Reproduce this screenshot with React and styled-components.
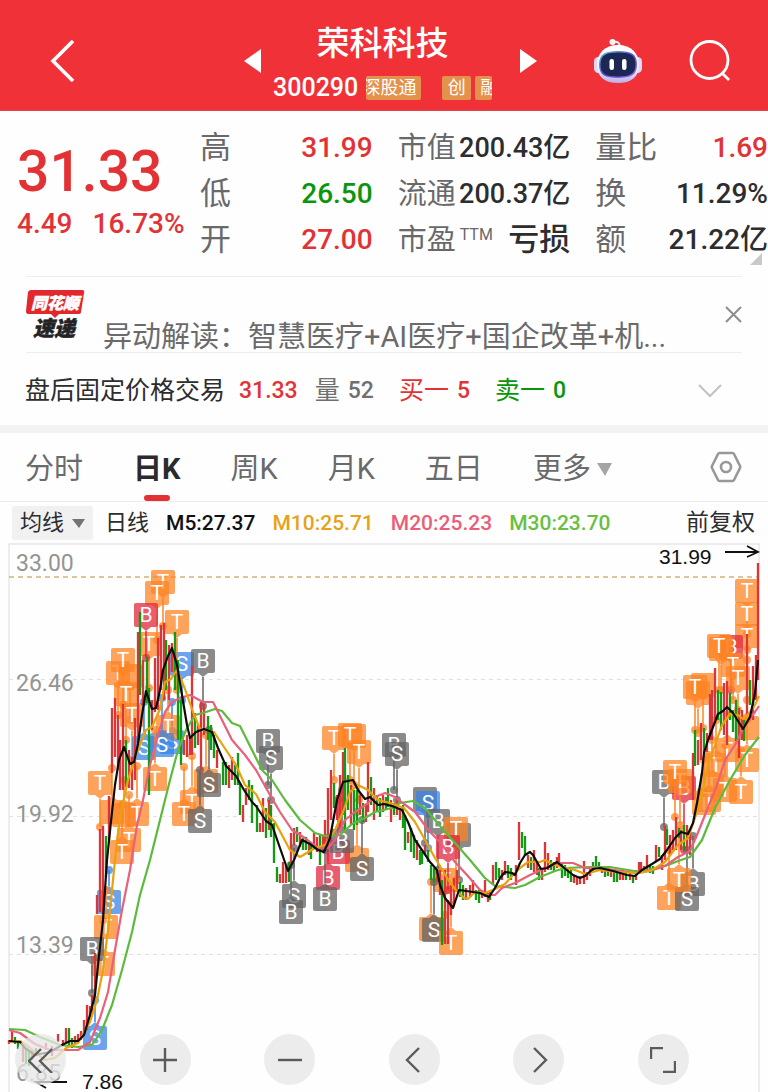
import React from "react";
import styled, { createGlobalStyle } from "styled-components";

const GlobalStyle = createGlobalStyle`
  * { box-sizing: border-box; }
  body {
    margin: 0;
    background: #fefefe;
    color: #2d2d2f;
    font-family: Roboto, "Noto Sans CJK SC", sans-serif;
  }
  button, select { font: inherit; color: inherit; border: 0; background: none; padding: 0; margin: 0; cursor: pointer; }
  svg { display: block; flex: none; }
  h1, p, dl, dd, dt { margin: 0; font-weight: 400; }
`;

const RED = "#e23236";
const GREEN = "#0a960a";

/* ---------- header ---------- */

const Header = styled.header`
  display: grid;
  grid-template-columns: 1fr auto 1fr;
  align-items: center;
  height: 111px;
  padding: 12px 37px 0 50px;
  background: #f03238;
  border-bottom: 1px solid #d9474b;
  color: #fff;
`;

const IconButton = styled.button`
  display: flex;
  align-items: center;
  justify-content: center;
  justify-self: start;
`;

const StockSwitcher = styled.div`
  display: flex;
  align-items: center;
  gap: 12px;
`;

const StockTitle = styled.div`
  display: flex;
  flex-direction: column;
  align-items: center;
  width: 235px;
  padding: 6px 16px 0 0;
`;

const StockName = styled.h1`
  font-size: 33px;
  line-height: 48px;
  font-weight: 500;
`;

const CodeRow = styled.div`
  display: flex;
  align-items: center;
  width: 100%;
  height: 40px;
`;

const Code = styled.span`
  font-size: 25px;
  line-height: 32px;
  font-weight: 500;
  margin-right: 8px;
`;

const Tag = styled.span`
  display: flex;
  justify-content: ${(p) => p.$from};
  width: ${(p) => p.$w}px;
  height: 24px;
  margin-right: ${(p) => p.$after || 0}px;
  padding: 0 5px;
  overflow: hidden;
  background: #e4914b;
  border-radius: 2px;
  font-size: 18px;
  line-height: 23px;
  white-space: nowrap;
`;

const HeaderActions = styled.div`
  display: flex;
  align-items: center;
  justify-content: flex-end;
  gap: 46px;
`;

/* ---------- quote ---------- */

const Quote = styled.section`
  position: relative;
  display: grid;
  grid-template-columns: 175px 1fr 1fr 1fr;
  column-gap: 25px;
  padding: 14px 0 13px;
`;

const PriceBlock = styled.div`
  padding: 14px 0 0 17px;
  color: ${RED};
`;

const Price = styled.p`
  font-size: 57px;
  line-height: 66px;
  font-weight: 500;
`;

const Change = styled.p`
  display: flex;
  gap: 20px;
  font-size: 28px;
  line-height: 38px;
  font-weight: 500;
`;

const StatList = styled.dl`
  display: flex;
  flex-direction: column;
`;

const Stat = styled.div`
  display: flex;
  align-items: center;
  justify-content: space-between;
  height: 46px;
  white-space: nowrap;
`;

const StatLabel = styled.dt`
  display: flex;
  color: #69696b;
  font-size: ${(p) => p.$size}px;
  line-height: 46px;
`;

const Sup = styled.span`
  margin-left: 4px;
  font-size: 16px;
  line-height: 36px;
`;

const StatValue = styled.dd`
  color: ${(p) => p.$color || "#2d2d2f"};
  font-size: ${(p) => p.$size}px;
  line-height: 46px;
  font-weight: 500;
`;

const Corner = styled.span`
  position: absolute;
  right: 6px;
  bottom: 11px;
  border-left: 12px solid transparent;
  border-bottom: 12px solid #c9c9c9;
`;

/* ---------- news + after hours ---------- */

const News = styled.section`
  display: flex;
  align-items: center;
  gap: 18px;
  height: 77px;
  margin: 0 26px;
  border: solid #ededed;
  border-width: 1px 0;
`;

const NewsLink = styled.a`
  flex: 1;
  min-width: 0;
  align-self: flex-end;
  color: #6a6a6c;
  font-size: 29px;
  line-height: 30px;
  white-space: nowrap;
  text-decoration: none;
`;

const AfterHours = styled.section`
  display: flex;
  align-items: center;
  height: 72px;
  padding: 4px 46px 0 25px;
  font-size: 25px;
  line-height: 36px;
  white-space: nowrap;
`;

const Figure = styled.span`
  display: flex;
  gap: 8px;
  margin-left: ${(p) => p.$before}px;
  color: ${(p) => p.$color};
`;

const Num = styled.span`
  font-size: 23px;
  font-weight: 500;
`;

const Spacer = styled.span`
  flex: 1;
`;

const Divider = styled.div`
  height: 8px;
  background: #f3f3f3;
`;

/* ---------- tabs ---------- */

const Tabs = styled.nav`
  display: flex;
  align-items: center;
  height: 69px;
  padding: 0 26px 0 25px;
  border-bottom: 1px solid #ececec;
`;

const Tab = styled.button`
  position: relative;
  display: flex;
  align-items: center;
  gap: 6px;
  height: 68px;
  padding-top: 4px;
  margin-right: 50px;
  color: ${(p) => (p.$active ? "#2b2b2d" : "#6a6a6c")};
  font-size: 29px;
  font-weight: ${(p) => (p.$active ? 700 : 400)};
  line-height: 64px;
  white-space: nowrap;
  &::after {
    content: "";
    position: absolute;
    left: 50%;
    bottom: 0;
    width: 26px;
    height: 6px;
    margin-left: -13px;
    border-radius: 3px;
    background: ${(p) => (p.$active ? RED : "transparent")};
  }
`;

const Averages = styled.div`
  display: flex;
  align-items: center;
  height: 41px;
  padding: 1px 13px 0 12px;
  font-size: 22px;
  line-height: 34px;
  white-space: nowrap;
`;

const SelectBox = styled.label`
  position: relative;
  display: flex;
  width: 81px;
  margin-right: 12px;
  background: #f1f1f1;
  border-radius: 3px;
  select { appearance: none; width: 100%; height: 34px; padding: 0 8px; outline: 0; line-height: 34px; }
  svg { position: absolute; right: 8px; top: 13px; pointer-events: none; }
`;

const Average = styled.span`
  margin-left: 17px;
  color: ${(p) => p.$color};
  font-size: 21px;
  font-weight: 500;
`;

const Adjust = styled.button`
  font-size: 23px;
`;

/* ---------- chart ---------- */

const ChartArea = styled.section`
  position: relative;
  > svg { width: 100%; height: auto; }
`;

const Controls = styled.div`
  position: absolute;
  left: 0;
  right: 0;
  bottom: 7px;
  display: flex;
  justify-content: space-between;
  padding: 0 79px 0 15px;
`;

const RoundButton = styled.button`
  display: flex;
  align-items: center;
  justify-content: center;
  width: 51px;
  height: 51px;
  border-radius: 50%;
  background: rgba(230, 230, 230, 0.76);
`;

const MOVING_AVERAGES = [
  {
    color: "#5cba3c",
    pts: "9,1029 25,1030 40,1037 60,1045 78,1047 92,1045 102,1030 112,1005 122,970 132,932 140,895 150,860 160,820 170,780 178,750 186,730 195,715 203,713 215,709 222,711 232,723 240,726 252,750 262,770 272,780 285,800 300,820 315,833 325,836 340,835 352,824 365,818 375,812 392,808 400,803 413,801 425,808 440,826 455,843 470,860 485,878 495,886 515,888 525,885 540,877 555,871 565,868 590,867 610,867 640,872 652,869 668,865 678,861 690,857 702,840 715,808 730,780 745,755 755,742 759,737",
  },
  {
    color: "#e9607b",
    pts: "9,1030 20,1033 35,1044 50,1050 60,1050 78,1050 90,1042 100,1018 108,992 115,950 122,910 130,870 137,825 142,805 150,765 158,735 165,712 172,702 180,698 190,695 203,702 213,702 222,720 232,740 245,755 256,770 270,795 280,812 292,830 305,838 318,848 328,848 335,840 345,820 355,812 368,803 375,797 385,793 395,797 404,804 415,812 430,832 440,842 455,862 467,875 480,890 487,895 495,895 502,888 515,883 530,875 545,868 560,863 573,863 585,868 600,868 615,870 635,873 650,871 665,866 678,857 690,851 697,835 707,810 717,785 725,760 735,745 745,725 755,712 759,706",
  },
  {
    color: "#e8a20c",
    pts: "9,1042 20,1041 30,1048 45,1060 55,1058 66,1048 78,1043 90,1022 97,1000 103,970 108,930 112,890 117,840 121,812 128,780 137,752 146,730 152,727 160,709 165,682 171,679 177,670 185,689 193,712 200,729 214,732 224,747 236,765 245,785 256,794 265,812 275,822 290,850 300,857 315,848 325,845 335,830 343,812 350,792 358,785 368,790 378,800 390,803 404,808 415,822 425,840 435,858 440,866 447,878 455,889 464,898 468,899 475,892 485,893 495,889 505,884 513,875 520,868 528,862 540,862 545,860 552,864 562,867 575,870 585,874 600,870 615,872 640,873 652,870 665,862 678,845 688,838 695,818 703,790 708,765 715,745 722,725 730,714 738,715 743,719 750,712 755,705 759,696",
  },
  {
    color: "#0c0c0c",
    pts: "9,1041 20,1042 25,1048 35,1055 50,1052 62,1045 70,1041 78,1041 84,1035 90,1015 95,995 98,965 103,920 107,860 112,812 115,785 119,760 124,747 130,764 134,762 138,744 142,715 146,691 152,709 156,708 160,690 163,670 168,656 172,648 177,665 182,695 187,725 190,738 196,732 204,729 212,732 218,748 226,766 236,776 244,790 252,802 256,806 266,821 272,825 280,848 288,871 294,860 302,840 310,844 318,850 324,852 330,838 337,800 343,782 353,780 358,790 365,799 370,797 378,805 384,804 392,806 402,810 408,822 415,840 424,853 430,862 437,870 440,885 445,898 453,908 459,890 466,891 480,893 489,897 495,888 500,878 505,872 512,873 515,875 520,863 525,855 530,852 533,855 537,862 541,869 547,868 557,862 563,867 573,875 580,878 585,876 593,869 600,868 613,871 627,875 635,876 642,870 652,864 660,859 667,850 675,838 681,832 688,834 693,823 697,803 702,773 704,753 708,740 718,714 723,711 727,707 733,713 743,729 750,717 755,693 758,660",
  },
];

/* x, high, low of each bar */
const UP_BARS =
  "9,1040,1044 12,1030,1041 23,1046,1062 32,1050,1060 46,1043,1050 52,1046,1056 58,1034,1042 63,1040,1044 66,1028,1042 75,1036,1045 78,1034,1043 81,1031,1040 84,1020,1035 87,1005,1030 90,1006,1017 92,995,1012 95,953,990 97,895,914 100,829,912 103,826,914 109,796,840 112,708,773 115,698,757 118,715,770 120,740,790 123,704,790 129,750,788 132,757,790 135,718,780 138,632,745 143,660,705 152,700,730 155,658,712 158,638,710 161,625,690 164,623,700 169,645,700 172,643,672 184,740,755 187,735,757 190,738,755 192,666,755 198,725,745 201,702,770 204,704,735 217,750,768 229,765,788 232,757,780 243,805,822 246,788,805 260,823,832 263,798,832 269,800,830 280,874,883 283,862,883 286,865,883 291,833,865 294,828,845 300,832,847 309,842,855 314,833,848 317,837,852 323,835,850 325,820,845 328,788,838 331,770,820 337,795,820 340,775,830 343,752,815 351,785,825 360,795,815 366,805,822 368,762,812 374,788,820 383,795,812 391,800,822 397,797,815 400,808,820 408,832,843 417,840,860 425,845,855 437,872,882 440,870,895 445,870,944 448,900,944 451,885,915 454,878,905 457,870,892 466,888,900 470,885,897 473,880,893 482,890,898 485,880,897 488,893,902 493,865,885 502,870,880 505,861,875 516,865,885 519,822,860 528,855,868 534,850,872 537,862,875 542,868,880 545,842,872 548,853,870 557,857,868 559,853,865 574,875,883 577,877,885 580,876,884 584,861,884 587,872,880 590,867,876 602,866,873 611,870,877 620,873,880 623,870,880 630,872,880 636,870,880 639,862,872 641,862,873 644,866,873 647,855,871 656,845,862 662,855,870 665,826,860 670,835,855 673,830,850 676,817,850 681,830,850 687,825,850 690,830,855 693,753,800 698,740,765 701,723,760 707,733,752 710,694,740 712,690,740 715,668,720 724,683,735 727,681,745 739,708,758 742,710,740 747,634,715 753,666,720 756,655,700 758,563,680";
const DOWN_BARS =
  "15,1037,1044 18,1041,1049 26,1048,1064 29,1052,1066 36,1048,1056 69,1028,1046 72,1038,1048 106,836,877 126,740,787 140,612,695 147,657,703 149,688,795 166,640,690 175,632,690 178,660,740 181,700,765 195,713,748 208,716,740 211,725,750 214,735,758 223,762,785 226,762,785 235,765,785 238,753,785 240,783,815 249,780,800 252,785,823 257,805,832 266,808,838 271,805,837 274,823,863 277,867,882 289,862,882 297,827,842 303,838,850 306,837,850 311,845,859 320,835,865 334,783,808 345,748,830 348,775,810 354,790,830 357,790,825 363,803,822 371,777,805 377,795,812 380,798,817 386,797,810 388,788,807 394,803,815 403,805,828 405,815,850 411,828,852 414,835,858 420,850,865 422,852,864 428,850,862 431,865,880 434,868,882 442,880,945 460,882,897 463,885,900 476,890,900 479,890,903 490,892,900 496,862,880 499,868,878 508,865,878 511,868,880 522,832,848 525,836,855 531,857,870 539,868,880 551,860,870 554,862,872 562,862,878 565,865,876 568,868,878 571,868,882 593,862,872 596,856,867 599,862,868 605,868,877 608,868,876 614,872,882 617,872,882 626,872,880 633,876,883 650,865,873 653,866,874 659,847,857 667,829,845 679,828,838 684,825,850 695,730,766 704,728,753 718,690,720 721,692,730 730,693,720 733,710,732 736,700,741 744,720,741 750,680,705";

/* x and y of the flag, colour key, letter, y of the bar that it points at */
const FLAGS = [
  [163, 582, "o", "T", 626], [157, 593, "o", "T", 640], [149, 644, "o", "T", 688], [146, 615, "r", "B", 658],
  [182, 664, "b", "S", 700], [177, 622, "o", "T", 690], [118, 673, "o", "T", 715], [130, 676, "o", "", 720],
  [123, 660, "o", "T", 705], [126, 694, "o", "T", 740], [132, 715, "o", "T", 760], [203, 661, "g", "B", 706],
  [172, 742, "b", "S", 702], [168, 727, "o", "T", 690], [144, 748, "b", "S", 702], [162, 745, "b", "S", 698],
  [155, 779, "o", "T", 730], [112, 812, "o", "", 768], [100, 783, "o", "T", 827], [124, 815, "o", "", 780],
  [137, 814, "o", "T", 766], [129, 840, "o", "T", 795], [122, 852, "o", "T", 805], [192, 802, "o", "T", 756],
  [206, 781, "o", "", 735], [184, 814, "o", "T", 767], [209, 785, "g", "S", 730], [200, 821, "g", "S", 770],
  [109, 902, "b", "S", 870], [106, 927, "o", "T", 890], [103, 964, "o", "T", 920], [92, 949, "g", "B", 993],
  [95, 1038, "b", "S", 1000], [268, 741, "g", "B", 785], [271, 758, "g", "S", 800], [294, 896, "g", "S", 848],
  [291, 912, "g", "B", 865], [334, 738, "o", "T", 780], [354, 736, "o", "", 785], [350, 735, "o", "T", 780],
  [359, 752, "o", "T", 800], [357, 860, "o", "", 812], [362, 869, "g", "S", 820], [338, 852, "r", "B", 800],
  [342, 841, "g", "B", 790], [328, 878, "r", "B", 838], [325, 899, "g", "B", 850], [394, 745, "g", "B", 790],
  [397, 754, "g", "S", 800], [425, 799, "g", "", 843], [428, 803, "b", "S", 848], [438, 821, "g", "B", 870],
  [459, 835, "g", "", 880], [456, 829, "o", "T", 880], [445, 880, "o", "T", 915], [448, 847, "r", "B", 890],
  [431, 929, "o", "", 882], [434, 930, "g", "S", 882], [451, 943, "o", "T", 905], [664, 782, "g", "B", 827],
  [684, 788, "r", "B", 850], [680, 781, "o", "T", 825], [675, 772, "o", "T", 817], [669, 898, "o", "T", 850],
  [693, 884, "g", "B", 836], [687, 899, "g", "S", 850], [679, 880, "o", "T", 830], [704, 803, "o", "T", 760],
  [709, 800, "o", "T", 755], [716, 765, "o", "T", 720], [712, 785, "o", "", 740], [727, 750, "o", "T", 715],
  [725, 790, "o", "T", 745], [741, 792, "o", "T", 750], [747, 760, "o", "T", 720], [747, 728, "o", "", 700],
  [747, 591, "o", "T", 634], [747, 614, "o", "T", 650], [747, 636, "o", "T", 660], [731, 647, "r", "B", 690],
  [721, 649, "o", "", 690], [719, 646, "o", "T", 690], [733, 665, "o", "T", 700], [738, 678, "o", "T", 710],
  [703, 685, "o", "", 728], [698, 693, "o", "", 733], [695, 687, "o", "T", 730],
];
const FLAG_COLORS = { o: "#ff8423", b: "#3985e6", g: "#636363", r: "#e2273d" };

function Flag({ x, y, kind, letter, target }) {
  const up = target < y;
  const edge = up ? y - 12 : y + 12;
  const tip = up ? edge - 4 : edge + 4;
  const color = FLAG_COLORS[kind];
  return (
    <g fill={color}>
      <g opacity="0.74">
        <rect x={x - 12} y={y - 12} width="24" height="24" rx="2" />
        <path d={`M${x - 5} ${edge}L${x} ${tip}L${x + 5} ${edge}Z`} />
        <circle cx={x} cy={target} r="4" />
      </g>
      <path d={`M${x} ${tip}V${target}`} stroke={color} strokeWidth="1.5" />
      <text x={x} y={y + 7} textAnchor="middle" fontSize="21" fill="#fff" fontFamily="Roboto, sans-serif">{letter}</text>
    </g>
  );
}

function Bars({ data, color }) {
  const d = data.split(" ").map((b) => {
    const [x, hi, lo] = b.split(",");
    return `M${x} ${hi}V${lo}`;
  }).join("");
  return <path d={d} stroke={color} strokeWidth="2.3" fill="none" />;
}

function KLineChart() {
  return (
    <svg viewBox="0 543 768 549" role="img" aria-label="日K">
      <path d="M9 1092V544H759V1092" fill="none" stroke="#e6e6e6" strokeWidth="1.4" />
      <path d="M9 679.500H759M9 816.500H759M9 954.500H759" stroke="#e2e2e2" strokeWidth="1.2" strokeDasharray="4 4" />
      <path d="M9 577H759" stroke="#cfb27c" strokeWidth="1.5" strokeDasharray="5 4" />
      {FLAGS.map(([x, y, kind, letter, target], i) => (
        <Flag key={i} x={x} y={y} kind={kind} letter={letter} target={target} />
      ))}
      <Bars data={UP_BARS} color="#dc3538" />
      <Bars data={DOWN_BARS} color="#129a14" />
      {MOVING_AVERAGES.map((m) => (
        <polyline key={m.color} points={m.pts} fill="none" stroke={m.color} strokeWidth="2.2" strokeLinejoin="round" />
      ))}
      <g fontFamily="Roboto, sans-serif" fontSize="23" fill="#949494">
        <text x="16" y="571">33.00</text>
        <text x="16" y="691">26.46</text>
        <text x="16" y="822">19.92</text>
        <text x="16" y="953">13.39</text>
        <text x="16" y="1081">6.85</text>
      </g>
      <g fontFamily="'Liberation Sans', sans-serif" fontSize="21" fill="#111">
        <text x="659" y="564">31.99</text>
        <text x="82" y="1089">7.86</text>
      </g>
      <path d="M725 552H757M747 546L758 552L747 557M67 1082H36L46 1088" fill="none" stroke="#111" strokeWidth="1.8" />
    </svg>
  );
}

const Line = ({ size, d, width = 2, color = "currentColor" }) => (
  <svg width={size[0]} height={size[1]} viewBox={`0 0 ${size[0]} ${size[1]}`} fill="none" stroke={color} strokeWidth={width}>
    <path d={d} />
  </svg>
);

const Triangle = ({ w, h, d, color }) => (
  <svg width={w} height={h} viewBox={`0 0 ${w} ${h}`} fill={color}>
    <path d={d} />
  </svg>
);

function Robot() {
  return (
    <svg width="50" height="46" viewBox="0 0 50 46">
      <defs>
        <linearGradient id="shell" x1="0" y1="0" x2="0" y2="1">
          <stop offset="0" stopColor="#fff" />
          <stop offset="0.65" stopColor="#efecff" />
          <stop offset="1" stopColor="#b8aee8" />
        </linearGradient>
        <linearGradient id="rim" x1="0" y1="0" x2="1" y2="1">
          <stop offset="0" stopColor="#62c7d6" />
          <stop offset="0.5" stopColor="#5d4ecf" />
          <stop offset="1" stopColor="#9a6cf0" />
        </linearGradient>
      </defs>
      <path d="M20 4C25 3 27 5 27 10" fill="none" stroke="#f0ecfb" strokeWidth="2" />
      <circle cx="19.500" cy="4" r="3" fill="#f8f4ff" />
      <rect x="1" y="19" width="9" height="16" rx="4.500" fill="#ddd8f7" />
      <rect x="40" y="19" width="9" height="16" rx="4.500" fill="#ddd8f7" />
      <path d="M25 7C38 7 46 15 46 27C46 39 38 45 25 45C12 45 4 39 4 27C4 15 12 7 25 7Z" fill="url(#shell)" />
      <path d="M25 13C38 13 44 16 44 26.500C44 37 38 40 25 40C12 40 6 37 6 26.500C6 16 12 13 25 13Z" fill="url(#rim)" />
      <path d="M25 14.500C37 14.500 42.500 17 42.500 26.500C42.500 36 37 38.500 25 38.500C13 38.500 7.500 36 7.500 26.500C7.500 17 13 14.500 25 14.500Z" fill="#1c2853" />
      <rect x="16.500" y="21" width="4.500" height="11" rx="2.200" fill="#fff" />
      <rect x="29" y="21" width="4.500" height="11" rx="2.200" fill="#fff" />
    </svg>
  );
}

function NewsBadge() {
  return (
    <svg width="59" height="52" viewBox="0 0 59 52" overflow="visible" role="img" aria-label="同花顺速递">
      <path d="M5 1H56Q59 1 58 4L55 23Q55 25 52 25H33L29 29L25 25H2Q0 25 0 22L2 3Q3 1 5 1Z" fill="#e3282d" />
      <g fontFamily="'Noto Sans CJK SC', sans-serif" fontWeight="900" fontStyle="italic" textAnchor="middle" strokeWidth="0.5">
        <text x="29" y="20" fontSize="16" fill="#fff" stroke="#fff">同花顺</text>
        <text x="28" y="47" fontSize="21" fill="#232325" stroke="#232325">速递</text>
      </g>
    </svg>
  );
}

const STATS = [
  [["高", "31.99", RED], ["低", "26.50", GREEN], ["开", "27.00", RED]],
  [["市值", "200.43亿"], ["流通", "200.37亿"], ["市盈", "亏损"]],
  [["量比", "1.69", RED], ["换", "11.29%"], ["额", "21.22亿"]],
];

const CONTROLS = [
  ["最早", "M24 2L12 14L24 26M13 2L1 14L13 26"],
  ["放大", "M13 1V25M1 13H25"],
  ["缩小", "M1 13H25"],
  ["左移", "M18 1L6 13L18 25"],
  ["右移", "M8 1L20 13L8 25"],
  ["全屏", "M1 12V1H13M25 14V25H13"],
];

export default function App() {
  return (
    <>
      <GlobalStyle />
      <Header>
        <IconButton aria-label="返回">
          <Line size={[26, 42]} width={3.6} d="M23 1L3 21L23 41" />
        </IconButton>
        <StockSwitcher>
          <IconButton aria-label="上一只">
            <Triangle w={17} h={24} d="M17 0V24L0 12Z" color="#fff" />
          </IconButton>
          <StockTitle>
            <StockName>荣科科技</StockName>
            <CodeRow>
              <Code>300290</Code>
              <Tag $w={56} $from="flex-end" $after={21}>深股通</Tag>
              <Tag $w={29} $from="center" $after={4}>创</Tag>
              <Tag $w={17} $from="flex-start">融</Tag>
            </CodeRow>
          </StockTitle>
          <IconButton aria-label="下一只">
            <Triangle w={17} h={24} d="M0 0V24L17 12Z" color="#fff" />
          </IconButton>
        </StockSwitcher>
        <HeaderActions>
          <IconButton aria-label="智能助手"><Robot /></IconButton>
          <IconButton aria-label="搜索">
            <Line size={[42, 42]} width={2.8} d="M39 20A18.500 18.500 0 1 1 2 20A18.500 18.500 0 1 1 39 20ZM33 33L40 40" />
          </IconButton>
        </HeaderActions>
      </Header>

      <Quote>
        <PriceBlock>
          <Price>31.33</Price>
          <Change><span>4.49</span><span>16.73%</span></Change>
        </PriceBlock>
        {STATS.map((list, col) => (
          <StatList key={col}>
            {list.map(([label, value, color]) => (
              <Stat key={label}>
                <StatLabel $size={col === 1 ? 29 : 31}>
                  {label}
                  {label === "市盈" && <Sup>TTM</Sup>}
                </StatLabel>
                <StatValue $color={color} $size={value === "亏损" ? 31 : col === 1 ? 27 : 28}>{value}</StatValue>
              </Stat>
            ))}
          </StatList>
        ))}
        <Corner />
      </Quote>

      <News>
        <NewsBadge />
        <NewsLink href="#news">异动解读：智慧医疗+AI医疗+国企改革+机...</NewsLink>
        <IconButton aria-label="关闭">
          <Line size={[17, 17]} width={2} color="#8d8d8f" d="M1 1L16 16M16 1L1 16" />
        </IconButton>
      </News>

      <AfterHours>
        <span>盘后固定价格交易</span>
        <Figure $before={14} $color={RED}><Num>31.33</Num></Figure>
        <Figure $before={17} $color="#707072">量<Num>52</Num></Figure>
        <Figure $before={25} $color={RED}>买一<Num>5</Num></Figure>
        <Figure $before={25} $color={GREEN}>卖一<Num>0</Num></Figure>
        <Spacer />
        <IconButton aria-label="展开">
          <Line size={[24, 14]} width={2} color="#c2c2c2" d="M1 1L12 12L23 1" />
        </IconButton>
      </AfterHours>
      <Divider />

      <Tabs>
        <Tab>分时</Tab>
        <Tab $active aria-current="page">日K</Tab>
        <Tab>周K</Tab>
        <Tab>月K</Tab>
        <Tab>五日</Tab>
        <Tab>更多<Triangle w={15} h={13} d="M0 0H15L8 13Z" color="#a5a5a5" /></Tab>
        <Spacer />
        <IconButton aria-label="设置">
          <svg width="32" height="32" viewBox="0 0 32 32" fill="none" stroke="#98989a" strokeWidth="2.600" strokeLinejoin="round">
            <path d="M9.500 2H22.500Q23.500 2 24 3L30 15Q30.500 16 30 17L24 29Q23.500 30 22.500 30H9.500Q8.500 30 8 29L2 17Q1.500 16 2 15L8 3Q8.500 2 9.500 2Z" />
            <circle cx="16" cy="16" r="5" />
          </svg>
        </IconButton>
      </Tabs>

      <Averages>
        <SelectBox>
          <select aria-label="指标" defaultValue="均线"><option>均线</option></select>
          <Triangle w={13} h={9} d="M0 0H13L7 9Z" color="#747476" />
        </SelectBox>
        <span>日线</span>
        <Average $color="#111">M5:27.37</Average>
        <Average $color="#e8a21a">M10:25.71</Average>
        <Average $color="#ea5f78">M20:25.23</Average>
        <Average $color="#67c042">M30:23.70</Average>
        <Spacer />
        <Adjust>前复权</Adjust>
      </Averages>

      <ChartArea>
        <KLineChart />
        <Controls>
          {CONTROLS.map(([label, d]) => (
            <RoundButton key={label} aria-label={label}>
              <Line size={[26, 26]} width={2.4} color="#5b5b5d" d={d} />
            </RoundButton>
          ))}
        </Controls>
      </ChartArea>
    </>
  );
}
